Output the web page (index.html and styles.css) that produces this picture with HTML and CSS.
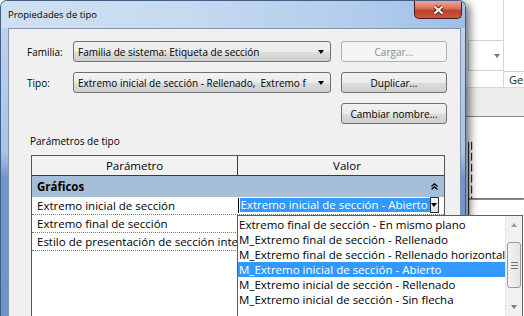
FILE: index.html
```html
<!DOCTYPE html>
<html lang="es">
<head>
  <meta charset="UTF-8">
  <title>Propiedades de tipo</title>
  <link rel="stylesheet" href="styles.css">
</head>
<body>
  <div class="dialog">
    <div class="titlebar">
      <span class="title">Propiedades de tipo</span>
      <button class="close" title="Cerrar">
        <svg width="13" height="10" viewBox="0 0 13 10">
          <path d="M2.5 1.5 L10.5 8.5 M10.5 1.5 L2.5 8.5" stroke="#5a2219" stroke-width="3.8" fill="none"/>
          <path d="M2.5 1.5 L10.5 8.5 M10.5 1.5 L2.5 8.5" stroke="#fff" stroke-width="2" fill="none"/>
        </svg>
      </button>
    </div>

    <div class="frame">
      <div class="panel">
        <div class="form">
          <label for="familia">Familia:</label>
          <div class="combo" id="familia"><span class="combo-text">Familia de sistema: Etiqueta de sección</span><i class="arrow"></i></div>
          <button class="btn" disabled>Cargar...</button>

          <label for="tipo">Tipo:</label>
          <div class="combo" id="tipo"><span class="combo-text">Extremo inicial de sección - Rellenado,&nbsp; Extremo f</span><i class="arrow"></i></div>
          <button class="btn">Duplicar...</button>

          <span></span>
          <span></span>
          <button class="btn">Cambiar nombre...</button>
        </div>

        <div class="section-label">Parámetros de tipo</div>

        <div class="props">
          <div class="props-head">
            <div class="head-cell first">Parámetro</div>
            <div class="head-cell second">Valor</div>
          </div>
          <div class="group">
            <span>Gráficos</span>
            <svg width="7" height="7" viewBox="0 0 7 7">
              <path d="M0.5 3.5 L3.5 0.8 L6.5 3.5 M0.5 6.5 L3.5 3.8 L6.5 6.5" stroke="#000" stroke-width="1.3" fill="none"/>
            </svg>
          </div>
          <div class="prop-row">
            <div class="name">Extremo inicial de sección</div>
            <div class="value editing">
              <span class="caret"></span>
              <span class="sel">Extremo inicial de sección - Abierto</span>
              <span class="drop-btn"><i class="arrow"></i></span>
            </div>
          </div>
          <div class="prop-row">
            <div class="name">Extremo final de sección</div>
            <div class="value"></div>
          </div>
          <div class="prop-row">
            <div class="name">Estilo de presentación de sección inte</div>
            <div class="value"></div>
          </div>
        </div>
      </div>
    </div>
  </div>

  <div class="backdrop">
    <div class="bd-top">
      <div class="bd-left">
        <div class="bd-combo"><i class="arrow gray"></i></div>
      </div>
      <div class="bd-right">
        <div class="bd-tab">Ge</div>
      </div>
    </div>
    <div class="bd-band"></div>
    <svg class="bd-canvas" width="58" height="200" viewBox="0 0 58 200">
      <path d="M2.5 25 V200" stroke="#000" stroke-width="1"/>
      <path d="M5.5 25 V82" stroke="#000" stroke-width="1" stroke-dasharray="8 3"/>
      <path d="M2 82.5 H58" stroke="#000" stroke-width="1"/>
    </svg>
  </div>

  <div class="droplist">
    <div class="items">
      <div class="item">Extremo final de sección - En mismo plano</div>
      <div class="item">M_Extremo final de sección - Rellenado</div>
      <div class="item">M_Extremo final de sección - Rellenado horizontal</div>
      <div class="item selected">M_Extremo inicial de sección - Abierto</div>
      <div class="item">M_Extremo inicial de sección - Rellenado</div>
      <div class="item">M_Extremo inicial de sección - Sin flecha</div>
    </div>
    <div class="scroll">
      <div class="sb-btn"><i class="tri up"></i></div>
      <div class="thumb"><i></i><i></i><i></i></div>
      <div class="sb-btn bottom"><i class="tri down"></i></div>
    </div>
  </div>
</body>
</html>
```

FILE: styles.css
```css
* {
  box-sizing: border-box;
}
html, body {
  margin: 0;
}
body {
  width: 524px;
  height: 316px;
  overflow: hidden;
  position: relative;
  display: flex;
  font-family: "Open Sans", "Noto Sans", sans-serif;
  font-size: 10px;
  color: #000;
  background: #fff;
}

/* dialog window */
.dialog {
  width: 466px;
  height: 316px;
  flex: none;
  display: flex;
  flex-direction: column;
  border: 1px solid #3f5f88;
  border-bottom: none;
  border-radius: 7px 7px 0 0;
  overflow: hidden;
  position: relative;
  z-index: 1;
  box-shadow: 4px 3px 9px rgba(0, 0, 0, 0.55);
}
.titlebar {
  height: 27px;
  flex: none;
  display: flex;
  justify-content: space-between;
  align-items: flex-start;
  padding: 0 3px 0 7px;
  background: linear-gradient(to right, #cfe0f3 0%, #c6daf0 40%, #b3cdec 75%, #9fbfe7 100%);
}
.title {
  line-height: 27px;
  font-size: 9.5px;
}
.close {
  width: 48px;
  height: 18px;
  padding: 0;
  border: 1px solid #4c1a12;
  border-top: none;
  border-radius: 0 0 5px 5px;
  background: linear-gradient(to bottom, #e8a89c 0%, #d5705d 45%, #c0402a 55%, #c9583f 100%);
  display: flex;
  align-items: center;
  justify-content: center;
}
.frame {
  flex: 1;
  display: flex;
  padding: 0 4px 0 7px;
  background: linear-gradient(to bottom, #bcd2ee 0%, #a9c3e6 125px, #7096cd 150px, #6f93c9 100%);
}
.panel {
  flex: 1;
  display: flex;
  flex-direction: column;
  background: #f0f0f0;
  border: 1px solid #8195b0;
  border-bottom: none;
}

/* top form */
.form {
  display: grid;
  grid-template-columns: 36px 258px 106px;
  grid-auto-rows: 21px;
  column-gap: 10px;
  row-gap: 10px;
  margin-top: 12px;
  padding-left: 18px;
  align-items: center;
}
.combo {
  height: 21px;
  display: flex;
  align-items: center;
  justify-content: space-between;
  padding: 0 6px 0 4px;
  border: 1px solid #707070;
  border-radius: 3px;
  background: linear-gradient(to bottom, #f2f2f2 0%, #ebebeb 50%, #dddddd 51%, #cfcfcf 100%);
}
.combo-text {
  flex: 1;
  overflow: hidden;
  white-space: nowrap;
  margin-right: 8px;
}
.arrow {
  display: block;
  flex: none;
  width: 0;
  height: 0;
  border-left: 3.5px solid transparent;
  border-right: 3.5px solid transparent;
  border-top: 4px solid #000;
}
.arrow.gray {
  border-top-color: #777;
}
.btn {
  height: 21px;
  padding: 0;
  font-family: inherit;
  font-size: 10px;
  color: #000;
  border: 1px solid #707070;
  border-radius: 3px;
  background: linear-gradient(to bottom, #f2f2f2 0%, #ebebeb 50%, #dddddd 51%, #cfcfcf 100%);
}
.btn:disabled {
  color: #8c8c8c;
  border-color: #adb2b5;
  background: #f4f4f4;
}
.section-label {
  margin-top: 10px;
  padding-left: 21px;
  line-height: 14px;
}

/* property grid */
.props {
  flex: 1;
  width: 414px;
  margin: 7px 0 0 22px;
  background: #fff;
  border: 1px solid #575757;
  border-bottom: none;
  font-size: 11.5px;
}
.props-head {
  display: grid;
  grid-template-columns: 206px 1fr;
  background: #f2f2f2;
  border-bottom: 1px solid #3c3c3c;
}
.head-cell {
  height: 19px;
  line-height: 19px;
  text-align: center;
}
.head-cell.first {
  border-right: 1px solid #3c3c3c;
}
.head-cell.second {
  padding-left: 12px;
}
.group {
  height: 21px;
  display: flex;
  align-items: center;
  justify-content: space-between;
  padding: 0 6px 0 5px;
  background: #a7bed8;
  font-weight: bold;
}
.prop-row {
  display: grid;
  grid-template-columns: 206px 1fr;
  height: 18px;
  border-bottom: 1px dotted #7a7a7a;
}
.name {
  padding-left: 5px;
  line-height: 17px;
  white-space: nowrap;
  overflow: hidden;
}
.value {
  padding-left: 2px;
  line-height: 17px;
  white-space: nowrap;
  overflow: hidden;
}
.value.editing {
  display: flex;
  align-items: flex-start;
  padding: 1px 5px 0 0;
}
.caret {
  width: 2px;
  height: 15px;
  margin-right: 1px;
  background: #000;
}
.sel {
  line-height: 14px;
  padding-right: 2px;
  background: #3399ff;
  color: #fff;
}
.drop-btn {
  width: 12px;
  height: 16px;
  margin-left: auto;
  margin-top: -1px;
  display: flex;
  align-items: center;
  justify-content: center;
  border: 1px solid #303030;
  background: linear-gradient(to bottom, #fafafa, #dedede);
}

/* dropdown list (open) */
.droplist {
  position: absolute;
  left: 237px;
  top: 215px;
  width: 286px;
  height: 108px;
  z-index: 2;
  display: flex;
  background: #fff;
  border: 1px solid #5e5e5e;
  font-size: 11.5px;
}
.items {
  flex: 1;
  padding-top: 1px;
}
.item {
  height: 15px;
  line-height: 15px;
  padding-left: 1px;
  white-space: nowrap;
}
.item.selected {
  background: #3399ff;
  color: #fff;
}
.scroll {
  width: 17px;
  display: flex;
  flex-direction: column;
  padding-bottom: 7px;
  background: #f1f1f1;
  border-left: 1px solid #e6e6e6;
}
.sb-btn {
  height: 17px;
  display: flex;
  align-items: center;
  justify-content: center;
}
.sb-btn.bottom {
  margin-top: auto;
}
.tri {
  width: 0;
  height: 0;
  border-left: 3.5px solid transparent;
  border-right: 3.5px solid transparent;
}
.tri.up {
  border-bottom: 4px solid #9a9a9a;
}
.tri.down {
  border-top: 4px solid #7a7a7a;
}
.thumb {
  height: 46px;
  margin: 9px 1px 0 1px;
  display: flex;
  flex-direction: column;
  align-items: center;
  justify-content: center;
  gap: 2px;
  border: 1px solid #9a9a9a;
  border-radius: 3px;
  background: linear-gradient(to right, #f3f3f3, #e4e4e4);
}
.thumb i {
  display: block;
  width: 7px;
  height: 1px;
  background: #6f6f6f;
}

/* application behind the dialog */
.backdrop {
  flex: 1;
  display: flex;
  flex-direction: column;
  background: #fff;
}
.bd-top {
  height: 88px;
  display: flex;
}
.bd-left {
  width: 37px;
  padding: 40px 0 0 2px;
}
.bd-combo {
  height: 31px;
  display: flex;
  align-items: center;
  justify-content: flex-end;
  padding-right: 3px;
  border: 1px solid #d2d2d2;
  border-right: none;
}
.bd-right {
  flex: 1;
  display: flex;
  flex-direction: column;
  justify-content: flex-end;
  border-left: 1px solid #d6d6d6;
}
.bd-tab {
  height: 16px;
  line-height: 15px;
  padding-left: 5px;
  font-size: 11px;
  color: #222;
  border-top: 1px solid #cfcfcf;
}
.bd-band {
  height: 30px;
  background: #eeeeee;
  border-top: 1px solid #d8d8d8;
  border-bottom: 1px solid #8a8a8a;
}
.bd-canvas {
  display: block;
}
```
